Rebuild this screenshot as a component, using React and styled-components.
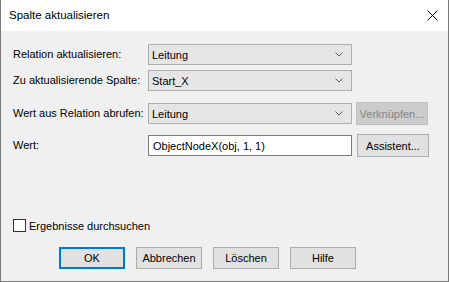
import React from "react";
import styled, { createGlobalStyle } from "styled-components";

const Global = createGlobalStyle`
  html, body { margin: 0; padding: 0; background: #ffffff; }
  body { font-family: "Liberation Sans", Arial, sans-serif; }
  * { box-sizing: border-box; }
`;

const Window = styled.div`
  width: 449px;
  height: 282px;
  border: 1px solid #7a7a7a;
  border-top: none;
  background: #f0f0f0;
  display: flex;
  flex-direction: column;
`;

const TitleBar = styled.div`
  height: 31px;
  background: #ffffff;
  display: flex;
  align-items: center;
  justify-content: space-between;
  padding: 0 10px 0 8px;
  flex-shrink: 0;
`;

const Title = styled.span`
  font-size: 11.5px;
  color: #000;
  margin-top: -1px;
`;

const CloseBtn = styled.div`
  width: 12px;
  height: 12px;
  display: flex;
  align-items: center;
  justify-content: center;
`;

const Content = styled.div`
  flex: 1;
  display: flex;
  flex-direction: column;
  padding: 13px 0 0 12px;
  font-size: 11px;
  color: #000;
`;

const Row = styled.div`
  display: grid;
  grid-template-columns: 135px 204px 76px;
  align-items: center;
  height: ${(p) => p.$h}px;
  margin-top: ${(p) => p.$mt}px;
`;

const Label = styled.span`
  margin-top: -2px;
  white-space: nowrap;
`;

const Combo = styled.div`
  height: 21px;
  background: #e5e5e5;
  border: 1px solid #adadad;
  display: flex;
  align-items: center;
  justify-content: space-between;
  padding: 0 8px 0 3px;
`;

const Input = styled.div`
  height: 21px;
  background: #ffffff;
  border: 1px solid #7a7a7a;
  display: flex;
  align-items: center;
  padding: 0 4px;
`;

const Button = styled.div`
  height: ${(p) => p.$h || 23}px;
  width: ${(p) => p.$w || 72}px;
  margin-left: ${(p) => p.$ml || 0}px;
  display: flex;
  align-items: center;
  justify-content: center;
  background: ${(p) => (p.$disabled ? "#cccccc" : "#e1e1e1")};
  border: ${(p) => (p.$default ? "2px solid #0078d7" : p.$disabled ? "1px solid #bfbfbf" : "1px solid #adadad")};
  color: ${(p) => (p.$disabled ? "#838383" : "#000")};
  font-size: 11px;
`;

const CheckRow = styled.div`
  display: flex;
  align-items: center;
  margin-top: 62px;
  gap: 3px;
`;

const Box = styled.div`
  width: 13px;
  height: 13px;
  background: #fff;
  border: 1px solid #333;
`;

const ButtonBar = styled.div`
  display: flex;
  gap: 11px;
  padding-left: 46px;
  margin-top: 15px;
`;

const Chevron = () => (
  <svg width="8" height="5" viewBox="0 0 8 5">
    <path d="M0.5 0.5 L4 4 L7.5 0.5" fill="none" stroke="#606060" strokeWidth="1" />
  </svg>
);

export default function App() {
  return (
    <>
      <Global />
      <Window>
        <TitleBar>
          <Title>Spalte aktualisieren</Title>
          <CloseBtn>
            <svg width="11" height="11" viewBox="0 0 11 11">
              <path d="M0.5 0.5 L10.5 10.5 M10.5 0.5 L0.5 10.5" stroke="#000" strokeWidth="1" />
            </svg>
          </CloseBtn>
        </TitleBar>
        <Content>
          <Row $h={21} $mt={0}>
            <Label>Relation aktualisieren:</Label>
            <Combo>Leitung<Chevron /></Combo>
          </Row>
          <Row $h={21} $mt={5}>
            <Label>Zu aktualisierende Spalte:</Label>
            <Combo>Start_X<Chevron /></Combo>
          </Row>
          <Row $h={23} $mt={11}>
            <Label>Wert aus Relation abrufen:</Label>
            <Combo>Leitung<Chevron /></Combo>
            <Button $disabled $ml={4}>Verknüpfen...</Button>
          </Row>
          <Row $h={23} $mt={9}>
            <Label>Wert:</Label>
            <Input>ObjectNodeX(obj, 1, 1)</Input>
            <Button $ml={5}>Assistent...</Button>
          </Row>
          <CheckRow>
            <Box />
            <span>Ergebnisse durchsuchen</span>
          </CheckRow>
          <ButtonBar>
            <Button $default $w={66} $h={22}>OK</Button>
            <Button $w={66} $h={22}>Abbrechen</Button>
            <Button $w={66} $h={22}>Löschen</Button>
            <Button $w={66} $h={22}>Hilfe</Button>
          </ButtonBar>
        </Content>
      </Window>
    </>
  );
}
